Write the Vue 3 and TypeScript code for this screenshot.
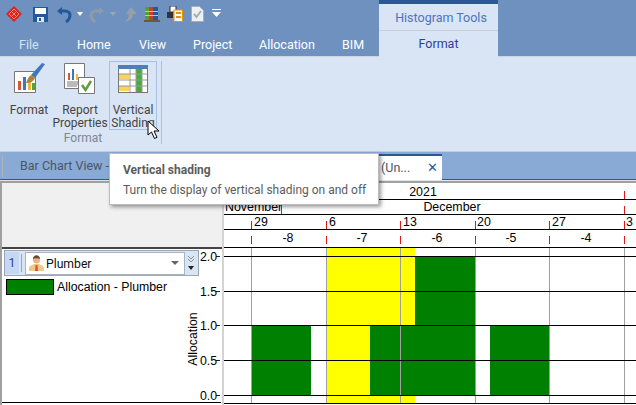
<script setup lang="ts">
const ribbonTabs = [
  { label: 'Home', width: 62 },
  { label: 'View', width: 54 },
  { label: 'Project', width: 66 },
  { label: 'Allocation', width: 83 },
  { label: 'BIM', width: 37 },
]

const gridX = [251.5, 326.5, 400.5, 475.5, 549.5, 624.5]
const valueLines = [
  { label: '2.0', y: 256.5 },
  { label: '1.5', y: 291.5 },
  { label: '1.0', y: 325.5 },
  { label: '0.5', y: 360.5 },
  { label: '0.0', y: 395.5 },
]
const days = [
  { label: '29', x: 254 },
  { label: '6', x: 329 },
  { label: '13', x: 403 },
  { label: '20', x: 477 },
  { label: '27', x: 552 },
  { label: '3', x: 626 },
]
const weeks = [
  { label: '-8', x: 288 },
  { label: '-7', x: 362 },
  { label: '-6', x: 437 },
  { label: '-5', x: 511 },
  { label: '-4', x: 586 },
]
const bars = [
  { x: 252, y: 325, w: 59, h: 70 },
  { x: 370, y: 325, w: 105, h: 70 },
  { x: 415, y: 256, w: 60, h: 69 },
  { x: 490, y: 325, w: 59, h: 70 },
]
const rowLines = [199.5, 214.5, 229.5]
</script>

<template>
  <div class="app">
    <header class="titlebar">
      <div class="titlebar-left">
        <div class="qat">
          <svg width="18" height="18" viewBox="0 0 18 18" class="qat-logo">
            <path d="M9 1l8 8-8 8-8-8z" fill="#d8261c" />
            <path d="M9 4l5 5-5 5-5-5z" fill="none" stroke="#f08a80" stroke-width="1" />
            <path d="M6.500 6.500l5 5M11.500 6.500l-5 5" stroke="#f08a80" stroke-width="1" />
          </svg>
          <svg width="15" height="15" viewBox="0 0 15 15" class="qat-save">
            <path d="M0 0h15v15H0z" fill="#1f5a9c" />
            <path d="M2 1h11v6H2z" fill="#fff" />
            <path d="M4 10h7v5H4z" fill="#dfe8f4" />
            <path d="M6 11h2v3H6z" fill="#1f5a9c" />
          </svg>
          <svg width="15" height="16" viewBox="0 0 15 16" class="qat-undo">
            <path d="M3 4h5c3 0 5 2 5 4s-1 5-4 7" fill="none" stroke="#1f5a9c" stroke-width="3" />
            <path d="M0 4l5-4v8z" fill="#1f5a9c" />
          </svg>
          <span class="caret"></span>
          <svg width="15" height="16" viewBox="0 0 15 16" class="qat-redo">
            <path d="M12 4H7C4 4 2 6 2 8s1 5 4 7" fill="none" stroke="#8f9aa6" stroke-width="3" />
            <path d="M15 4l-5-4v8z" fill="#8f9aa6" />
          </svg>
          <span class="caret caret-off"></span>
          <svg width="15" height="15" viewBox="0 0 15 15" class="qat-up">
            <path d="M9 0l6 7h-4c0 4-3 7-9 8 3-2 5-4 5-8H4z" fill="#97a0a8" />
          </svg>
          <svg width="16" height="16" viewBox="0 0 16 16" class="qat-books">
            <path d="M1 1h4v13H1z" fill="#5d9a3a" />
            <path d="M5 1h4v13H5z" fill="#c8402c" />
            <path d="M9 1h5v13H9z" fill="#1f5a9c" />
            <path d="M1 5h13v1H1zM1 9h13v1H1z" fill="#f2c53c" />
            <path d="M0 14h16v2H0z" fill="#6b5a3a" />
          </svg>
          <svg width="16" height="16" viewBox="0 0 16 16" class="qat-print">
            <path d="M3 0h6v6H3z" fill="#fff" stroke="#333" />
            <path d="M0 6h6v6H0z" fill="#333" />
            <path d="M7 4h8.500v11.500H7z" fill="#fff" stroke="#e8920c" />
            <path d="M9 6h5v2H9zM9 10h5v2H9z" fill="#e8920c" />
          </svg>
          <svg width="13" height="16" viewBox="0 0 13 16" class="qat-doc">
            <path d="M.5.500h8l4 4v11H.5z" fill="#eef1f4" stroke="#a6adb4" />
            <path d="M3 8l2.500 3L10 5" fill="none" stroke="#a6adb4" stroke-width="2" />
          </svg>
          <svg width="9" height="8" viewBox="0 0 9 8" class="qat-more">
            <path d="M0 0h9v1H0z" fill="#fff" />
            <path d="M0 3h9L4.500 8z" fill="#fff" />
          </svg>
        </div>
        <nav class="tabs">
          <span class="tab-file">File</span>
          <span v-for="tab in ribbonTabs" :key="tab.label" class="tab" :style="{ width: tab.width + 'px' }">{{ tab.label }}</span>
        </nav>
      </div>
      <div class="context">
        <div class="context-title">Histogram Tools</div>
        <div class="context-tab">Format</div>
      </div>
    </header>

    <section class="ribbon">
      <div class="ribbon-group">
        <div class="ribbon-buttons">
          <button class="rbtn rbtn-format">
            <svg width="32" height="32" viewBox="0 0 32 32">
              <path d="M1.500 8.500h21v21h-21z" fill="#fff" stroke="#777" />
              <path d="M5 18h3v9H5z" fill="#d4583a" />
              <path d="M10 14h3v13h-3z" fill="#3f78b8" />
              <path d="M15 18h3v9h-3z" fill="#e9b93f" />
              <path d="M19 20h3v7h-3z" fill="#5ca03c" />
              <path d="M32 1l-3-1-11 12 4 3z" fill="#3f78b8" />
              <path d="M18 12l4 3c-1 3-5 5-9 5 1-2 2-6 5-8z" fill="#ad8238" />
            </svg>
            <span>Format</span>
          </button>
          <button class="rbtn rbtn-report">
            <svg width="32" height="32" viewBox="0 0 32 32">
              <path d="M.500.500h20v25H.500z" fill="#fff" stroke="#777" />
              <path d="M4 10h2v7H4z" fill="#d4583a" />
              <path d="M8 6h2v11H8z" fill="#3f78b8" />
              <path d="M12 11h2v6h-2z" fill="#e9b93f" />
              <path d="M3 19h14M3 21h14M3 23h10" stroke="#777" />
              <path d="M14.500 14.500h16v16h-16z" fill="#fff" stroke="#777" />
              <path d="M18 22l3.500 5L27 18" fill="none" stroke="#5ca03c" stroke-width="2.500" />
            </svg>
            <span>Report<br />Properties</span>
          </button>
          <button class="rbtn rbtn-shade">
            <svg width="30" height="28" viewBox="0 0 30 28">
              <path d="M0 0h30v28H0z" fill="#777" />
              <path d="M1 4h28v23H1z" fill="#fff" />
              <path d="M0 0h30v4H0z" fill="#4a7fba" />
              <path d="M1 9h10v5H1zM1 21h10v5H1z" fill="#fbd35a" />
              <path d="M18 4h6v23h-6z" fill="#43ad3c" />
              <path d="M1 9h28M1 15h28M1 21h28M12 4v23M18 4v23M24 4v23" stroke="#999" stroke-width="1" fill="none" />
            </svg>
            <span>Vertical<br />Shading</span>
          </button>
        </div>
        <div class="group-label">Format</div>
      </div>
      <svg class="cursor" width="13" height="20" viewBox="0 0 13 20">
        <path d="M1 1v14l3.500-3 3 6.500 2.500-1.200-3-6.300h5z" fill="#fff" stroke="#000" stroke-width="1" />
      </svg>
    </section>

    <div class="doctabs">
      <span class="doctab-first">Bar Chart View - </span>
      <span class="doctab-active"><span class="doctab-text">(Un...</span><span class="doctab-x">✕</span></span>
    </div>

    <div class="tooltip">
      <div class="tooltip-title">Vertical shading</div>
      <div class="tooltip-desc">Turn the display of vertical shading on and off</div>
    </div>

    <main class="view">
      <aside class="side">
        <div class="side-head"></div>
        <div class="side-body">
          <div class="selector">
            <span class="selector-num">1</span>
            <span class="selector-sep"></span>
            <div class="combo">
              <svg width="15" height="16" viewBox="0 0 15 16">
                <path d="M0 16v-3c0-2 3-3 5-4h5c2 1 5 2 5 4v3z" fill="#f0c987" />
                <path d="M6.500 10h2l.500 6H6z" fill="#d4583a" />
                <circle cx="7.500" cy="5" r="3.500" fill="#e8b48c" />
                <path d="M4 4c0-5 7-5 7 0-2-1-5-1-7 0z" fill="#6b4a30" />
              </svg>
              <span class="combo-text">Plumber</span>
              <span class="combo-arrow"></span>
            </div>
            <div class="selector-more">
              <svg width="8" height="7" viewBox="0 0 8 7"><path d="M1 0l3 3 3-3M1 3l3 3 3-3" fill="none" stroke="#8a939e" /></svg>
              <span class="more-arrow"></span>
            </div>
          </div>
          <div class="legend">
            <span class="swatch"></span>
            <span>Allocation - Plumber</span>
          </div>
        </div>
      </aside>
      <svg class="chart" width="636" height="224" viewBox="0 181 636 224">
        <rect x="326" y="248" width="89" height="155" fill="#ffff00" />
        <rect v-for="(b, i) in bars" :key="i" :x="b.x" :y="b.y" :width="b.w" :height="b.h" fill="#008000" />
        <line v-for="x in gridX" :key="'g' + x" :x1="x" :x2="x" y1="248" y2="403" stroke="#a0a0a0" />
        <line v-for="v in valueLines" :key="v.label" x1="224" x2="636" :y1="v.y" :y2="v.y" stroke="#000" />
        <line x1="224" x2="636" y1="403.500" y2="403.500" stroke="#000" />

        <line v-for="y in rowLines" :key="y" x1="224" x2="636" :y1="y" :y2="y" stroke="#000" />
        <line x1="224" x2="636" y1="247.500" y2="247.500" stroke="#000" />
        <g class="head-text">
          <text x="423" y="196" text-anchor="middle">2021</text>
          <text x="452" y="211" text-anchor="middle">December</text>
          <text x="225" y="211">November</text>
          <text v-for="d in days" :key="d.label" :x="d.x" y="226">{{ d.label }}</text>
          <text v-for="w in weeks" :key="w.label" :x="w.x" y="242" text-anchor="middle">{{ w.label }}</text>
        </g>
        <g stroke="#e0181c">
          <line x1="281.500" x2="281.500" y1="200" y2="214" />
          <line x1="624.500" x2="624.500" y1="191" y2="199" />
          <line x1="624.500" x2="624.500" y1="206" y2="214" />
          <template v-for="x in gridX" :key="'t' + x">
            <line :x1="x" :x2="x" y1="221" y2="229" />
            <line :x1="x" :x2="x" y1="236" y2="244" />
          </template>
        </g>
        <line v-for="v in valueLines" :key="'k' + v.label" x1="216" x2="220" :y1="v.y" :y2="v.y" stroke="#222" />
      </svg>
      <div class="axis">
        <div v-for="v in valueLines" :key="v.label" class="axis-label" :style="{ top: v.y - 181 - 7 + 'px' }">{{ v.label }}</div>
        <div class="axis-title">Allocation</div>
      </div>
    </main>
  </div>
</template>

<style scoped>
.app { width: 636px; height: 405px; overflow: hidden; position: relative; background: #d9e4f4; font-family: Roboto, "Noto Sans", sans-serif; font-size: 12.5px; }

.titlebar { height: 57px; background: #6f91bf; display: flex; box-sizing: border-box; border-bottom: 1px solid #cfd6e0; }
.titlebar-left { width: 379px; }
.qat { height: 32px; display: flex; align-items: flex-start; padding-top: 5px; box-sizing: border-box; }
.qat svg { flex: none; }
.qat-logo { margin-left: 5px; }
.qat-save { margin: 2px 0 0 10px; }
.qat-undo { margin: 2px 0 0 9px; }
.caret { width: 0; height: 0; border: 3.5px solid transparent; border-top: 4px solid #fff; border-bottom: 0; margin: 7px 0 0 5px; }
.caret-off { border-top-color: #98a6b8; margin-left: 6px; }
.qat-redo { margin: 2px 0 0 6px; }
.qat-up { margin: 2px 0 0 6px; }
.qat-books { margin: 1px 0 0 7px; }
.qat-print { margin: 1px 0 0 7px; }
.qat-doc { margin: 1px 0 0 8px; }
.qat-more { margin: 4px 0 0 8px; }
.tabs { display: flex; height: 24px; color: #fff; line-height: 25px; }
.tab-file { width: 77px; padding-left: 19px; box-sizing: border-box; color: #d6e2f2; }
.tab { flex: none; }
.context { width: 119px; background: #d9e4f4; border-top: 4px solid #2b5797; box-sizing: border-box; height: 57px; text-align: center; display: flex; flex-direction: column; }
.context-title { height: 27px; line-height: 27px; color: #4f74b8; box-sizing: border-box; padding-left: 5px; border-bottom: 1px solid #c9cfd8; flex: none; }
.context-tab { line-height: 26px; color: #2f3f98; }

.ribbon { height: 94px; position: relative; box-sizing: border-box; padding: 4px 0 0 3px; }
.ribbon-group { width: 158px; height: 83px; border-right: 1px solid #b6bfca; }
.ribbon-buttons { display: flex; height: 70px; }
.rbtn { border: 1px solid transparent; background: none; padding: 0; margin: 0; font: inherit; font-size: 12px; color: #444; line-height: 13px; display: flex; flex-direction: column; align-items: center; flex: none; white-space: nowrap; }
.rbtn svg { flex: none; height: 32px; margin: 1px 0 9px; }
.rbtn-format { width: 52px; }
.rbtn-report { width: 50px; margin-right: 4px; }
.rbtn-shade { width: 48px; height: 69px; border-color: #a9c0e0; }
.rbtn-shade svg { height: 28px; margin: 3px 0 11px; }
.group-label { text-align: center; color: #7d8794; line-height: 14px; width: 160px; font-size: 12px; }
.cursor { position: absolute; left: 147px; top: 63px; }

.doctabs { height: 30px; background: #8aaad6; position: relative; box-sizing: border-box; border-top: 1px solid #c4ccd8; border-bottom: 1px solid #dfe6f0; box-shadow: inset 0 -1px 0 #2b5797; line-height: 27px; padding-left: 20px; color: #4a5566; font-size: 12.5px; }
.doctabs::before { content: ""; position: absolute; left: 2px; top: 3px; width: 1px; height: 22px; background: #aab4c2; }
.doctab-active { position: absolute; left: 365px; top: 2px; width: 77px; height: 26px; background: #fff; border-top: 2px solid #2b5797; box-sizing: border-box; padding-left: 16px; line-height: 24px; }
.doctab-text { color: #4a5566; }
.doctab-x { position: absolute; left: 62px; top: 0; color: #2b5797; }

.tooltip { position: absolute; left: 109px; top: 153px; width: 270px; height: 52px; z-index: 5; background: #fff; border: 1px solid #bcbcbc; box-sizing: border-box; box-shadow: 2px 2px 4px rgba(0, 0, 0, 0.4); padding: 8px 13px; color: #5c5c5c; font-size: 12px; white-space: nowrap; }
.tooltip-title { font-weight: 700; margin-bottom: 4px; line-height: 16px; }
.tooltip-desc { line-height: 16px; }

.view { position: relative; height: 224px; background: #fff; border-top: 2px solid #a0a0a0; font-family: "Liberation Sans", Arial, sans-serif; font-size: 12.3px; }
.side { width: 219px; height: 100%; border-left: 2px solid #a0a0a0; border-right: 2px solid #d4d4d4; padding-right: 1px; }
.side-head { height: 64px; background: #f0f0f0; border-bottom: 2px solid #444; margin-right: -1px; }
.side-body { padding: 1px 0 0 2px; height: 154px; box-sizing: border-box; border-bottom: 1px solid #000; }
.selector { width: 195px; height: 26px; box-sizing: border-box; background: #d9e4f4; border: 1px solid #9aa6b8; display: flex; align-items: center; }
.selector-num { width: 14px; height: 22px; background: #c5d7f2; text-align: center; line-height: 22px; color: #2f3f98; font-family: Roboto, sans-serif; flex: none; }
.selector-sep { width: 1px; height: 18px; background: #9aa6b8; margin: 0 3px 0 2px; flex: none; }
.combo { width: 160px; height: 23px; flex: none; box-sizing: border-box; background: #fff; border: 1px solid #a9b4c3; display: flex; align-items: center; padding-left: 3px; gap: 2px; font-family: Roboto, sans-serif; font-size: 12.2px; color: #111; }
.combo-text { flex: 1; padding-top: 1px; }
.combo-arrow { width: 0; height: 0; border: 4px solid transparent; border-top: 4px solid #666; border-bottom: 0; margin-right: 5px; }
.selector-more { margin-left: 2px; display: flex; flex-direction: column; align-items: center; gap: 3px; }
.more-arrow { width: 0; height: 0; border: 3.500px solid transparent; border-top: 4px solid #222; border-bottom: 0; }
.legend { display: flex; align-items: center; gap: 3px; margin: 3px 0 0 2px; line-height: 16px; }
.swatch { width: 48px; height: 16px; box-sizing: border-box; background: #008000; border: 1px solid #000; }
.chart { position: absolute; left: 0; top: -2px; pointer-events: none; }
.head-text { font: 12.4px "Liberation Sans", Arial, sans-serif; fill: #000; }
.axis { position: absolute; left: 0; top: -2px; }
.axis-label { position: absolute; left: 200px; line-height: 14px; background: none; }
.axis-title { position: absolute; left: 166px; top: 151px; width: 54px; text-align: center; line-height: 14px; transform: rotate(-90deg); white-space: nowrap; }
</style>
